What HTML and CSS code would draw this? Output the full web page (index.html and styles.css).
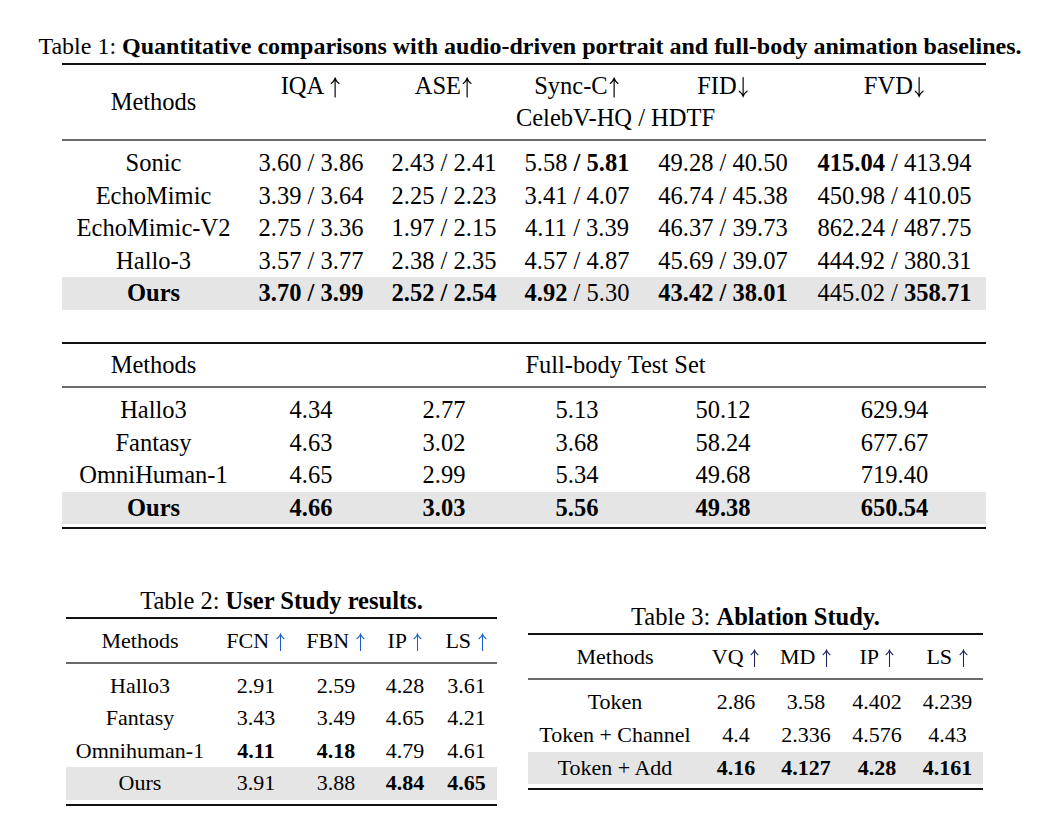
FILE: index.html
```html
<!DOCTYPE html>
<html>
<head>
<meta charset="utf-8">
<link rel="stylesheet" href="styles.css">
</head>
<body>
<div class="page">
  <div class="cap cap1">Table 1: <b>Quantitative comparisons with audio-driven portrait and full-body animation baselines.</b></div>
  <div class="t1">
    <div class="block top">
      <div class="head1">
        <div class="c mh">Methods</div>
        <div class="c">IQA <svg class="arr" viewBox="0 0 12 20"><path d="M6 19.5V1.5M2.2 6.2Q4.8 4.4 6 1.2Q7.2 4.4 9.8 6.2"/></svg></div>
        <div class="c">ASE<svg class="arr" viewBox="0 0 12 20"><path d="M6 19.5V1.5M2.2 6.2Q4.8 4.4 6 1.2Q7.2 4.4 9.8 6.2"/></svg></div>
        <div class="c">Sync-C<svg class="arr" viewBox="0 0 12 20"><path d="M6 19.5V1.5M2.2 6.2Q4.8 4.4 6 1.2Q7.2 4.4 9.8 6.2"/></svg></div>
        <div class="c">FID<svg class="arr" viewBox="0 0 12 20"><path d="M6 0.5V18.5M2.2 13.8Q4.8 15.6 6 18.8Q7.2 15.6 9.8 13.8"/></svg></div>
        <div class="c">FVD<svg class="arr" viewBox="0 0 12 20"><path d="M6 0.5V18.5M2.2 13.8Q4.8 15.6 6 18.8Q7.2 15.6 9.8 13.8"/></svg></div>
        <div class="c span">CelebV-HQ / HDTF</div>
      </div>
    </div>
    <div class="block mid">
      <div class="row r1"><div>Sonic</div><div>3.60 / 3.86</div><div>2.43 / 2.41</div><div>5.58 <b>/ 5.81</b></div><div>49.28 / 40.50</div><div><b>415.04</b> / 413.94</div></div>
      <div class="row r1"><div>EchoMimic</div><div>3.39 / 3.64</div><div>2.25 / 2.23</div><div>3.41 / 4.07</div><div>46.74 / 45.38</div><div>450.98 / 410.05</div></div>
      <div class="row r1"><div>EchoMimic-V2</div><div>2.75 / 3.36</div><div>1.97 / 2.15</div><div>4.11 / 3.39</div><div>46.37 / 39.73</div><div>862.24 / 487.75</div></div>
      <div class="row r1"><div>Hallo-3</div><div>3.57 / 3.77</div><div>2.38 / 2.35</div><div>4.57 / 4.87</div><div>45.69 / 39.07</div><div>444.92 / 380.31</div></div>
      <div class="row r1 hl"><div><b>Ours</b></div><div><b>3.70 / 3.99</b></div><div><b>2.52 / 2.54</b></div><div><b>4.92</b> / 5.30</div><div><b>43.42 / 38.01</b></div><div>445.02 / <b>358.71</b></div></div>
    </div>
    <div class="block top second">
      <div class="row r1 headrow"><div>Methods</div><div class="span">Full-body Test Set</div></div>
    </div>
    <div class="block mid bot">
      <div class="row r1"><div>Hallo3</div><div>4.34</div><div>2.77</div><div>5.13</div><div>50.12</div><div>629.94</div></div>
      <div class="row r1"><div>Fantasy</div><div>4.63</div><div>3.02</div><div>3.68</div><div>58.24</div><div>677.67</div></div>
      <div class="row r1"><div>OmniHuman-1</div><div>4.65</div><div>2.99</div><div>5.34</div><div>49.68</div><div>719.40</div></div>
      <div class="row r1 hl"><div><b>Ours</b></div><div><b>4.66</b></div><div><b>3.03</b></div><div><b>5.56</b></div><div><b>49.38</b></div><div><b>650.54</b></div></div>
    </div>
  </div>

  <div class="bottom">
    <div class="fig f2">
      <div class="cap">Table 2: <b>User Study results.</b></div>
      <div class="sm t2">
        <div class="block top">
          <div class="row r2"><div>Methods</div><div>FCN <svg class="arr ab" viewBox="0 0 12 20"><path d="M6 19.5V1.5M2.2 6.2Q4.8 4.4 6 1.2Q7.2 4.4 9.8 6.2"/></svg></div><div>FBN <svg class="arr ab" viewBox="0 0 12 20"><path d="M6 19.5V1.5M2.2 6.2Q4.8 4.4 6 1.2Q7.2 4.4 9.8 6.2"/></svg></div><div>IP <svg class="arr ab" viewBox="0 0 12 20"><path d="M6 19.5V1.5M2.2 6.2Q4.8 4.4 6 1.2Q7.2 4.4 9.8 6.2"/></svg></div><div>LS <svg class="arr ab" viewBox="0 0 12 20"><path d="M6 19.5V1.5M2.2 6.2Q4.8 4.4 6 1.2Q7.2 4.4 9.8 6.2"/></svg></div></div>
        </div>
        <div class="block mid bot">
          <div class="row r2"><div>Hallo3</div><div>2.91</div><div>2.59</div><div>4.28</div><div>3.61</div></div>
          <div class="row r2"><div>Fantasy</div><div>3.43</div><div>3.49</div><div>4.65</div><div>4.21</div></div>
          <div class="row r2"><div>Omnihuman-1</div><div><b>4.11</b></div><div><b>4.18</b></div><div>4.79</div><div>4.61</div></div>
          <div class="row r2 hl"><div>Ours</div><div>3.91</div><div>3.88</div><div><b>4.84</b></div><div><b>4.65</b></div></div>
        </div>
      </div>
    </div>
    <div class="fig f3">
      <div class="cap">Table 3: <b>Ablation Study.</b></div>
      <div class="sm t3">
        <div class="block top">
          <div class="row r3"><div>Methods</div><div>VQ <svg class="arr an" viewBox="0 0 12 20"><path d="M6 19.5V1.5M2.2 6.2Q4.8 4.4 6 1.2Q7.2 4.4 9.8 6.2"/></svg></div><div>MD <svg class="arr an" viewBox="0 0 12 20"><path d="M6 19.5V1.5M2.2 6.2Q4.8 4.4 6 1.2Q7.2 4.4 9.8 6.2"/></svg></div><div>IP <svg class="arr an" viewBox="0 0 12 20"><path d="M6 19.5V1.5M2.2 6.2Q4.8 4.4 6 1.2Q7.2 4.4 9.8 6.2"/></svg></div><div>LS <svg class="arr an" viewBox="0 0 12 20"><path d="M6 19.5V1.5M2.2 6.2Q4.8 4.4 6 1.2Q7.2 4.4 9.8 6.2"/></svg></div></div>
        </div>
        <div class="block mid bot">
          <div class="row r3"><div>Token</div><div>2.86</div><div>3.58</div><div>4.402</div><div>4.239</div></div>
          <div class="row r3"><div>Token + Channel</div><div>4.4</div><div>2.336</div><div>4.576</div><div>4.43</div></div>
          <div class="row r3 hl"><div>Token + Add</div><div><b>4.16</b></div><div><b>4.127</b></div><div><b>4.28</b></div><div><b>4.161</b></div></div>
        </div>
      </div>
    </div>
  </div>
</div>
</body>
</html>
```

FILE: styles.css
```css
html, body {
  margin: 0;
  padding: 0;
  background: #ffffff;
}
body {
  font-family: "Liberation Serif", "Times New Roman", serif;
  color: #000;
  font-size: 24.5px;
}
b { font-weight: bold; }

.page {
  padding-top: 31px;
}

.cap {
  text-align: center;
  line-height: 30px;
  font-size: 24.5px;
  white-space: nowrap;
}
.cap1 {
  font-size: 24px;
  margin-bottom: 2px;
  padding-left: 12px;
}

.arr {
  display: inline-block;
  width: 0.5em;
  height: 0.84em;
  vertical-align: -0.15em;
  fill: none;
  stroke: currentColor;
  stroke-width: 1.15;
  stroke-linecap: round;
}

.t1 {
  width: 924px;
  margin: 0 auto;
}

.block.top {
  border-top: 2px solid #111;
  padding-top: 5px;
  padding-bottom: 5px;
  border-bottom: 2px solid #6a6a6a;
}
.block.mid {
  padding-top: 6px;
}
.block.bot {
  padding-bottom: 3px;
  border-bottom: 2px solid #111;
}
.block.second {
  margin-top: 32px;
}

.head1 {
  display: grid;
  grid-template-columns: 183px 132px 134px 132px 160px 183px;
  grid-template-rows: 32px 32px;
  line-height: 32px;
  text-align: center;
}
.head1 .mh {
  grid-row: 1 / 3;
  align-self: center;
}
.head1 .span {
  grid-column: 2 / 7;
  grid-row: 2;
}

.row {
  display: grid;
  text-align: center;
  white-space: nowrap;
}
.r1 {
  grid-template-columns: 183px 132px 134px 132px 160px 183px;
  line-height: 32.5px;
  height: 32.5px;
}
.r1.headrow .span {
  grid-column: 2 / 7;
}
.hl {
  background: #e5e5e5;
}

.bottom {
  display: flex;
  align-items: center;
  gap: 31px;
  padding-left: 66px;
  margin-top: 57px;
}
.fig .cap {
  margin-bottom: 1px;
}
.sm {
  font-size: 22px;
}
.t2 { width: 431px; }
.t3 { width: 455px; }
.sm .block.top {
  padding-top: 6px;
  padding-bottom: 4px;
}
.t3 .block.top {
  padding-bottom: 5px;
}
.sm .block.bot {
  padding-bottom: 4px;
}
.r2 {
  grid-template-columns: 148px 84px 76px 62px 61px;
  line-height: 32.6px;
  height: 32.6px;
}
.r3 {
  grid-template-columns: 174px 68px 72px 70px 71px;
  line-height: 32.6px;
  height: 32.6px;
}
.ab { color: #1a5fc8; }
.an { color: #1c2460; }
```
